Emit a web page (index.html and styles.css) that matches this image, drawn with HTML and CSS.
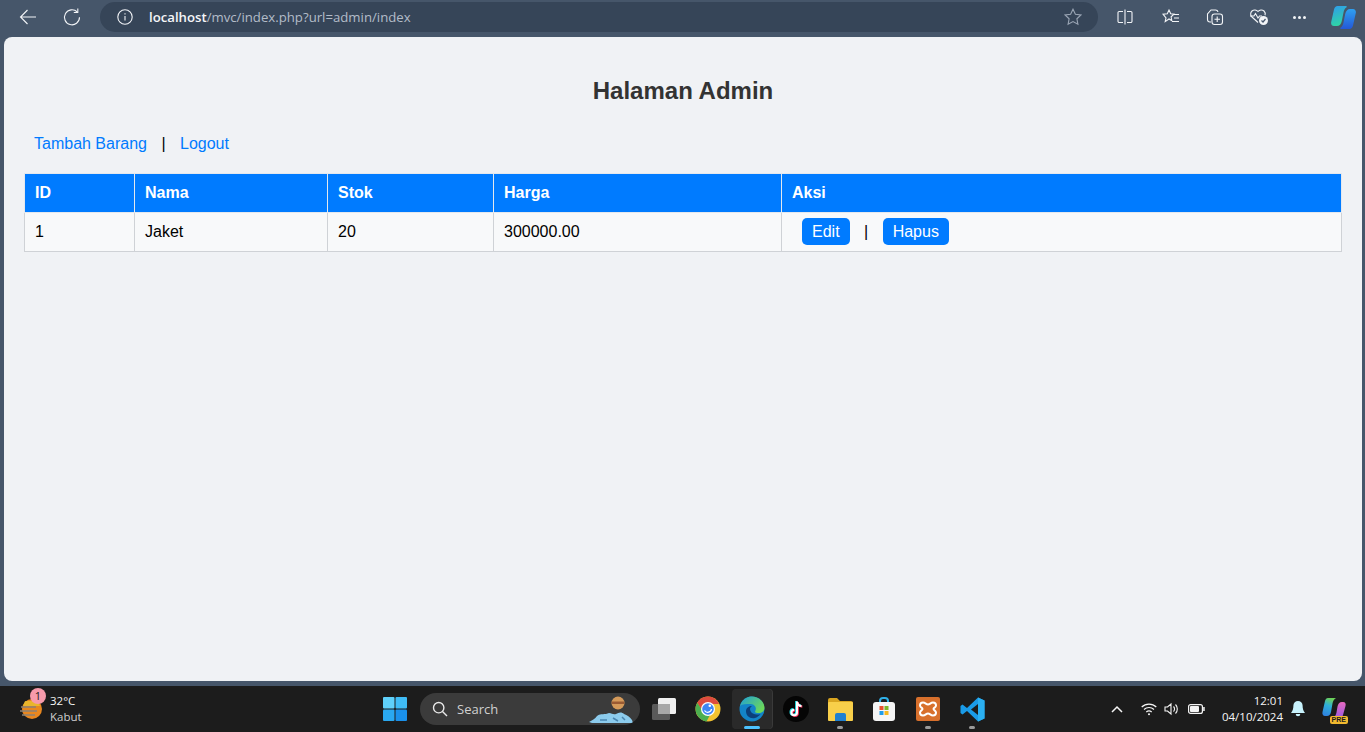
FILE: index.html
```html
<!DOCTYPE html>
<html lang="id">
<head>
  <meta charset="UTF-8">
  <meta name="viewport" content="width=device-width, initial-scale=1.0">
  <title>Halaman Admin</title>
  <link rel="stylesheet" href="styles.css">
</head>
<body>
  <div class="screen">

    <!-- browser toolbar -->
    <div class="toolbar">
      <span class="tool-btn back">
        <svg width="20" height="20" viewBox="0 0 20 20" fill="none" stroke="#f2f4f7" stroke-width="1.1"><path d="M18 10H2.500M9.500 3 2.500 10l7 7"/></svg>
      </span>
      <span class="tool-btn reload">
        <svg width="20" height="20" viewBox="0 0 20 20" fill="none" stroke="#f2f4f7" stroke-width="1.1"><path d="M15.300 5A7.500 7.500 0 1 0 17.500 10.300"/><path d="M15.800 1.500v4h-4"/></svg>
      </span>
      <div class="address">
        <svg class="info" width="16" height="16" viewBox="0 0 16 16" fill="none" stroke="#f2f4f7" stroke-width="1.1"><circle cx="8" cy="8" r="7.200"/><path d="M8 7v4.500M8 4.300v1.300"/></svg>
        <span class="url"><b>localhost</b>/mvc/index.php?url=admin/index</span>
        <svg class="star" width="18" height="18" viewBox="0 0 18 18" fill="none" stroke="#9aa5b4" stroke-width="1.1"><path d="M9 1.200l2.400 5.100 5.500.7-4 3.800 1 5.500L9 13.600l-4.900 2.700 1-5.500-4-3.800 5.500-.7z"/></svg>
      </div>
      <div class="tool-icons">
        <svg width="16" height="16" viewBox="0 0 16 16" fill="none" stroke="#f2f4f7" stroke-width="1.1"><path d="M6 2.500H2.200a1.200 1.200 0 0 0-1.200 1.200v8.600a1.200 1.200 0 0 0 1.200 1.200H6M10 2.500h3.800A1.200 1.200 0 0 1 15 3.700v8.600a1.200 1.200 0 0 1-1.200 1.200H10M8 .5v15"/></svg>
        <svg width="18" height="18" viewBox="0 0 18 18" fill="none" stroke="#f2f4f7" stroke-width="1.1"><path d="M7 2l1.700 3.700 3.300.4-2.900 2.700.7 3.800L7 11l-3.800 2.600.8-3.800L1 6.100l4.300-.4zM12 6.500h5M12 10h5M10 13.500h7"/></svg>
        <svg width="18" height="18" viewBox="0 0 18 18" fill="none" stroke="#f2f4f7" stroke-width="1.1"><path d="M5 14H4a2.500 2.500 0 0 1-2.500-2.500V6L5 2h4.500A2.500 2.500 0 0 1 12 4"/><rect x="6" y="6" width="10.500" height="10.500" rx="2.500"/><path d="M11.200 8.500v5.500M8.500 11.200H14"/></svg>
        <svg width="20" height="18" viewBox="0 0 20 18" fill="none" stroke="#f2f4f7" stroke-width="1.1"><path d="M9 14.500 3 9a4 4 0 0 1 0-6 4.200 4.200 0 0 1 6 .5 4.200 4.200 0 0 1 6-.5c1.200 1.200 1.500 2.800 1 4.200"/><path d="M1 8h4l1.500-2.500L9 10l1.500-2H13"/><circle cx="14.500" cy="12.500" r="4.500" fill="#f2f4f7" stroke="none"/><path d="M12.500 12.500l1.500 1.500 2.500-3" stroke="#45566c" stroke-width="1.200"/></svg>
        <span class="dots"><i></i><i></i><i></i></span>
        <svg class="copilot" width="25" height="23" viewBox="0 0 25 23">
          <defs>
            <linearGradient id="copA" x1="0.3" y1="0" x2="0.6" y2="1"><stop offset="0" stop-color="#2f9fe8"/><stop offset="1" stop-color="#2fd8a0"/></linearGradient>
            <linearGradient id="copB" x1="0.5" y1="0" x2="0.5" y2="1"><stop offset="0" stop-color="#2fa0f0"/><stop offset="1" stop-color="#2458d8"/></linearGradient>
          </defs>
          <path d="M6.500 0H15c1 0 1 1 .3 1.500-1.500 1-2.300 2.500-2.800 5L10.800 15c-.6 3-2.300 5-5 5H3C.8 20-.3 18 .2 16L3 3.500C3.500 1.300 4.800 0 6.500 0z" fill="url(#copA)"/>
          <path d="M18.500 23H10c-1 0-1-1-.3-1.500 1.500-1 2.300-2.500 2.800-5l1.700-8.500c.6-3 2.300-5 5-5H22c2.200 0 3.300 2 2.800 4L22 19.500c-.5 2.200-1.800 3.500-3.500 3.500z" fill="url(#copB)"/>
        </svg>
      </div>
    </div>

    <!-- page content -->
    <main class="page">
      <h1>Halaman Admin</h1>
      <div class="actions">
        <a href="#">Tambah Barang</a> | <a href="#">Logout</a>
      </div>
      <table>
        <thead>
          <tr>
            <th class="col-id">ID</th>
            <th class="col-nama">Nama</th>
            <th class="col-stok">Stok</th>
            <th class="col-harga">Harga</th>
            <th>Aksi</th>
          </tr>
        </thead>
        <tbody>
          <tr>
            <td>1</td>
            <td>Jaket</td>
            <td>20</td>
            <td>300000.00</td>
            <td><a class="btn" href="#">Edit</a> | <a class="btn" href="#">Hapus</a></td>
          </tr>
        </tbody>
      </table>
    </main>

    <!-- windows taskbar -->
    <footer class="taskbar">
      <div class="weather">
        <span class="weather-icon">
          <svg width="24" height="24" viewBox="0 0 24 24"><circle cx="13" cy="12" r="10" fill="#e8871f"/><path d="M6 4h13l2 5H4z" fill="#e8c02f" opacity=".8"/><path d="M2 10h15M1 14h17M3 18h13" stroke="#8a8175" stroke-width="1.500"/></svg>
          <span class="badge">1</span>
        </span>
        <div class="weather-text">
          <span>32°C</span>
          <span class="dim">Kabut</span>
        </div>
      </div>

      <div class="apps">
        <span class="app">
          <svg width="24" height="24" viewBox="0 0 24 24"><rect x="0" y="0" width="11.500" height="11.500" rx="1" fill="#5fd0fa"/><rect x="12.500" y="0" width="11.500" height="11.500" rx="1" fill="#3fbcf6"/><rect x="0" y="12.500" width="11.500" height="11.500" rx="1" fill="#2aa8f0"/><rect x="12.500" y="12.500" width="11.500" height="11.500" rx="1" fill="#1a90ea"/></svg>
        </span>
        <div class="search">
          <svg width="16" height="16" viewBox="0 0 16 16" fill="none" stroke="#e8e8e8" stroke-width="1.400"><circle cx="6.700" cy="6.700" r="5.200"/><path d="M10.500 10.500 15 15"/></svg>
          <span>Search</span>
          <svg class="search-art" width="44" height="32" viewBox="0 0 44 32">
            <circle cx="29" cy="10" r="6.500" fill="#d49a5a"/>
            <path d="M22.800 8.500h12.400v2.500H22.800z" fill="#9a5a32"/>
            <path d="M0 29c3-2 6-3 8-6 4-3 8-1 12-3 3 0 4 2 7 1 3-2 6-2 8 0 3 1 6 3 8 6l1 3H3z" fill="#8ccbec"/>
            <path d="M11 27h7M24 25l5 3M33 24l3 3" stroke="#4a86b0" stroke-width="1.500"/>
          </svg>
        </div>
        <span class="app">
          <svg width="24" height="22" viewBox="0 0 24 22"><rect x="0" y="6" width="18" height="16" rx="1.500" fill="#5a5a5a"/><rect x="6" y="0" width="18" height="16" rx="1.500" fill="#f0f0f0"/><rect x="6" y="6" width="12" height="10" fill="#a8a8a8"/></svg>
        </span>
        <span class="app">
          <svg width="26" height="26" viewBox="0 0 26 26">
            <circle cx="13" cy="13" r="12.500" fill="#f2c230"/>
            <path d="M13 .5A12.500 12.500 0 0 0 2.200 6.800L8 16.500 13 8h11A12.500 12.500 0 0 0 13 .5z" fill="#dd4b3e"/>
            <path d="M2.200 6.800A12.500 12.500 0 0 0 11.500 25.400L16 17H9z" fill="#4caf50"/>
            <circle cx="13" cy="13" r="7" fill="#fff"/>
            <circle cx="13" cy="13" r="5.800" fill="#3f86f4"/>
            <path d="M9.500 14.500a3.800 3.800 0 0 0 7-1.500" fill="none" stroke="#fff" stroke-width="1.300"/>
            <circle cx="14.800" cy="9.800" r="1.300" fill="#fff"/>
          </svg>
        </span>
        <span class="app active">
          <svg width="26" height="26" viewBox="0 0 26 26">
            <defs>
              <linearGradient id="edgeA" x1="0" y1="0" x2="1" y2="0.6"><stop offset="0" stop-color="#1f9fd8"/><stop offset="1" stop-color="#6cd85a"/></linearGradient>
            </defs>
            <circle cx="13" cy="13" r="12.500" fill="#1384c8"/>
            <path d="M1 10C3 3 8 .5 13 .5c7 0 12.500 5.500 12.500 11.500 0 3-2.500 5-6 5-2 0-3.500-.5-3.500-1.500 2-3 .5-7-4-7.500C7 8 3 8 1 10z" fill="url(#edgeA)"/>
            <path d="M16 22c-5 1-9-2-9-7 0-3 3-5 6-5-2 1-2.500 3-1.500 5 1.200 3 5.500 4.500 10 3-1.500 2-3.500 3.500-5.500 4z" fill="#0c3f7a"/>
          </svg>
          <i class="run wide"></i>
        </span>
        <span class="app">
          <svg width="26" height="26" viewBox="0 0 26 26"><circle cx="13" cy="13" r="13" fill="#050505"/><path d="M14 5.500v11a2.800 2.800 0 1 1-2.800-2.800M14 6c.4 2.400 2 3.800 4.500 4" fill="none" stroke="#25e0e8" stroke-width="2.200" transform="translate(-.8 -.6)"/><path d="M14 5.500v11a2.800 2.800 0 1 1-2.800-2.800M14 6c.4 2.400 2 3.800 4.500 4" fill="none" stroke="#f5305a" stroke-width="2.200" transform="translate(.8 .6)"/><path d="M14 5.500v11a2.800 2.800 0 1 1-2.800-2.800M14 6c.4 2.400 2 3.800 4.500 4" fill="none" stroke="#fff" stroke-width="2"/></svg>
        </span>
        <span class="app">
          <svg width="25" height="23" viewBox="0 0 25 23"><path d="M0 2a2 2 0 0 1 2-2h7l3 3h11a2 2 0 0 1 2 2v3H0z" fill="#d9a520"/><rect x="0" y="4" width="25" height="19" rx="1" fill="#f8cf4a"/><path d="M7 23v-6a2 2 0 0 1 2-2h7a2 2 0 0 1 2 2v6z" fill="#1f80d0"/></svg>
          <i class="run"></i>
        </span>
        <span class="app">
          <svg width="24" height="24" viewBox="0 0 24 24"><path d="M8 7V4a3 3 0 0 1 3-3h2a3 3 0 0 1 3 3v3" fill="none" stroke="#2fb0e8" stroke-width="2"/><rect x="1" y="5" width="22" height="19" rx="3" fill="#f5f5f5"/><rect x="7.500" y="9" width="4" height="4" fill="#e8502e"/><rect x="12.500" y="9" width="4" height="4" fill="#7cb82a"/><rect x="7.500" y="14" width="4" height="4" fill="#1f9ce8"/><rect x="12.500" y="14" width="4" height="4" fill="#f5b81f"/></svg>
        </span>
        <span class="app">
          <svg width="24" height="24" viewBox="0 0 24 24"><rect width="24" height="24" rx="2" fill="#d8702c"/><path d="M7 5.500c2.500 0 3 2 5 2s2.500-2 5-2c2 0 3 1.500 3 3 0 2-2.500 2.200-2.500 3.500s2.500 1.500 2.500 3.500c0 1.500-1 3-3 3-2.500 0-3-2-5-2s-2.500 2-5 2c-2 0-3-1.500-3-3 0-2 2.500-2.200 2.500-3.500S4 10.500 4 8.500c0-1.500 1-3 3-3z" fill="none" stroke="#fff" stroke-width="2"/></svg>
          <i class="run"></i>
        </span>
        <span class="app">
          <svg width="25" height="25" viewBox="0 0 25 25"><path d="M18 .5 24.500 3.500v18L18 24.500 7 14l-4.500 3.500L.5 16V9l2-1.500L7 11z" fill="#1a9be8"/><path d="M18 7 11 12.500l7 5.500z" fill="#1c1c1c"/><path d="M18 .5 24.500 3.500v18L18 24.500z" fill="#2bb0f2"/></svg>
          <i class="run"></i>
        </span>
      </div>

      <div class="tray">
        <svg class="chevron" width="12" height="8" viewBox="0 0 12 8" fill="none" stroke="#f5f5f5" stroke-width="1.500"><path d="M1 7l5-5 5 5"/></svg>
        <svg class="wifi" width="16" height="14" viewBox="0 0 16 14" fill="none" stroke="#f5f5f5" stroke-width="1.200"><path d="M.7 5a10.500 10.500 0 0 1 14.600 0M3 7.500a7.200 7.200 0 0 1 10 0M5.300 10a4 4 0 0 1 5.400 0"/><circle cx="8" cy="12.300" r="1" fill="#f5f5f5" stroke="none"/></svg>
        <svg class="sound" width="16" height="14" viewBox="0 0 16 14" fill="none" stroke="#f5f5f5" stroke-width="1.100"><path d="M1 5v4h2.500L7 12V2L3.500 5zM9.500 4.500a3.500 3.500 0 0 1 0 5M11.500 2.500a6.500 6.500 0 0 1 0 9"/></svg>
        <svg class="battery" width="17" height="10" viewBox="0 0 17 10"><rect x=".6" y=".6" width="13.800" height="8.800" rx="2" fill="none" stroke="#f5f5f5" stroke-width="1.200"/><rect x="2" y="2" width="9" height="6" rx="1" fill="#f5f5f5"/><rect x="15.200" y="3" width="1.500" height="4" fill="#f5f5f5"/></svg>
        <div class="clock">
          <span>12:01</span>
          <span>04/10/2024</span>
        </div>
        <svg class="bell" width="14" height="16" viewBox="0 0 14 16"><path d="M7 0a4.600 4.600 0 0 1 4.600 4.600c0 3 .6 5 2.400 7.400H0c1.800-2.400 2.400-4.400 2.400-7.400A4.600 4.600 0 0 1 7 0zM4.700 13h4.600a2.300 2.300 0 0 1-4.600 0z" fill="#c8f2fc"/></svg>
        <span class="copilot-pre">
          <svg width="24" height="22" viewBox="0 0 24 22">
            <defs>
              <linearGradient id="preA" x1="0.5" y1="0" x2="0.2" y2="1"><stop offset="0" stop-color="#6cd05a"/><stop offset="0.4" stop-color="#2fb0d8"/><stop offset="1" stop-color="#2f80e0"/></linearGradient>
              <linearGradient id="preB" x1="0.5" y1="0" x2="0.5" y2="1"><stop offset="0" stop-color="#e86ac0"/><stop offset="1" stop-color="#9a5ae0"/></linearGradient>
            </defs>
            <path d="M6 1h8c-2 1-3 3-3.500 5.500L9 15c-.5 2.500-2 4-4 4H3c-2 0-3-2-2.500-4L3 4c.5-2 1.500-3 3-3z" fill="url(#preA)"/>
            <path d="M18 21h-7c2-1 3-3 3.500-5.500l1-6C16 7 17.500 5 20 5h1c2.500 0 3 2 2.500 4L21 18c-.5 2-1.500 3-3 3z" fill="url(#preB)"/>
          </svg>
          <span class="pre">PRE</span>
        </span>
      </div>
    </footer>

  </div>
</body>
</html>
```

FILE: styles.css
```css
* {
  box-sizing: border-box;
}
body {
  margin: 0;
  font-family: "Liberation Sans", Arial, sans-serif;
}
.screen {
  width: 1365px;
  height: 732px;
  overflow: hidden;
  display: flex;
  flex-direction: column;
  background: #46566a;
}

/* browser toolbar */
.toolbar {
  height: 37px;
  display: flex;
  align-items: center;
  flex-shrink: 0;
  font-family: "Open Sans", "Noto Sans", sans-serif;
}
.tool-btn {
  width: 20px;
  height: 20px;
  display: block;
  margin-top: -3px;
}
.tool-btn svg {
  display: block;
}
.back {
  margin-left: 18px;
}
.reload {
  margin-left: 24px;
}
.address {
  margin-left: 18px;
  width: 998px;
  height: 30px;
  margin-top: -3px;
  border-radius: 15px;
  background: #364558;
  display: flex;
  align-items: center;
  padding: 0 16px 0 17px;
}
.url {
  margin-left: 16px;
  font-size: 13.2px;
  color: #b3bcc8;
  white-space: nowrap;
}
.url b {
  font-weight: 600;
  color: #f5f6f8;
}
.star {
  margin-left: auto;
}
.tool-icons {
  flex: 1;
  display: flex;
  align-items: center;
  margin-top: -3px;
  padding-left: 19px;
}
.tool-icons svg:nth-child(2) {
  margin-left: 29px;
}
.tool-icons svg:nth-child(3) {
  margin-left: 26px;
}
.tool-icons svg:nth-child(4) {
  margin-left: 25px;
}
.dots {
  margin-left: 24px;
  display: flex;
  gap: 2px;
}
.dots i {
  width: 3px;
  height: 3px;
  border-radius: 50%;
  background: #f2f4f7;
}
.tool-icons .copilot {
  margin-left: 25px;
}

/* page */
.page {
  flex: 1;
  margin: 0 3px 5px 4px;
  background: #f0f2f5;
  border-radius: 8px;
  padding: 40px 20px 0;
  color: #000;
  font-size: 16px;
}
h1 {
  margin: 0 0 30px;
  font-size: 24px;
  text-align: center;
  color: #333;
}
.actions {
  margin-bottom: 20px;
}
.actions a {
  color: #007bff;
  text-decoration: none;
  margin: 0 10px;
}
table {
  width: 1318px;
  border-collapse: collapse;
  background: #f8f9fa;
}
th, td {
  border: 1px solid #cfd2d6;
  padding: 10px;
  text-align: left;
  line-height: 18px;
}
th {
  background: #007bff;
  color: #fff;
  border-color: #e4e8ee;
}
.col-id {
  width: 110px;
}
.col-nama {
  width: 193px;
}
.col-stok {
  width: 166px;
}
.col-harga {
  width: 288px;
}
.btn {
  background: #007bff;
  color: #fff;
  text-decoration: none;
  padding: 5px 10px;
  margin: 0 10px;
  border-radius: 5px;
}

/* taskbar */
.taskbar {
  height: 46px;
  flex-shrink: 0;
  background: #1c1c1c;
  display: flex;
  align-items: center;
  position: relative;
  font-family: "Open Sans", "Noto Sans", sans-serif;
  color: #f5f5f5;
  font-size: 12px;
}
.weather {
  width: 373px;
  display: flex;
  align-items: center;
  padding-left: 19px;
}
.weather-icon {
  position: relative;
  width: 24px;
  height: 24px;
}
.weather-icon svg {
  display: block;
}
.badge {
  position: absolute;
  top: -9px;
  left: 11px;
  width: 16px;
  height: 16px;
  border-radius: 50%;
  background: #f79aab;
  color: #1c1c1c;
  font-size: 11px;
  line-height: 16px;
  text-align: center;
}
.weather-text {
  margin-left: 7px;
  display: flex;
  flex-direction: column;
  font-size: 11.5px;
  line-height: 16px;
}
.dim {
  color: #cfcfcf;
}
.apps {
  display: flex;
  align-items: center;
}
.app {
  width: 44px;
  height: 40px;
  position: relative;
  display: flex;
  align-items: center;
  justify-content: center;
}
.app.active {
  background: #2a2a2a;
  border-radius: 4px;
  box-shadow: 1px 0 0 #3a3a3a;
  width: 40px;
  margin: 0 2px;
}
.run {
  position: absolute;
  left: 50%;
  bottom: 0;
  width: 6px;
  height: 3px;
  margin-left: -3px;
  border-radius: 2px;
  background: #9a9a9a;
}
.run.wide {
  width: 16px;
  margin-left: -8px;
  background: #4cc2ff;
}
.search {
  width: 220px;
  height: 32px;
  margin-left: 3px;
  margin-right: 2px;
  border-radius: 16px;
  background: #3b3b3b;
  display: flex;
  align-items: center;
  padding-left: 12px;
  font-size: 13px;
  color: #d0d0d0;
  overflow: hidden;
}
.search span {
  margin-left: 9px;
}
.search-art {
  margin-left: auto;
  margin-right: 7px;
}
.tray {
  position: absolute;
  right: 0;
  top: 0;
  height: 46px;
  display: flex;
  align-items: center;
}
.wifi {
  margin-left: 18px;
}
.sound {
  margin-left: 7px;
}
.battery {
  margin-left: 8px;
}
.clock {
  margin-left: 17px;
  display: flex;
  flex-direction: column;
  align-items: flex-end;
  font-size: 11.5px;
  line-height: 16px;
}
.bell {
  margin-left: 8px;
}
.copilot-pre {
  position: relative;
  width: 24px;
  height: 24px;
  margin-left: 17px;
  margin-right: 19px;
}
.pre {
  position: absolute;
  right: -2px;
  bottom: -3px;
  background: #f2b92f;
  color: #1c1c1c;
  font-family: "Liberation Sans", sans-serif;
  font-weight: bold;
  font-size: 7px;
  line-height: 8px;
  padding: 0 2px;
  border-radius: 2px;
}
```
